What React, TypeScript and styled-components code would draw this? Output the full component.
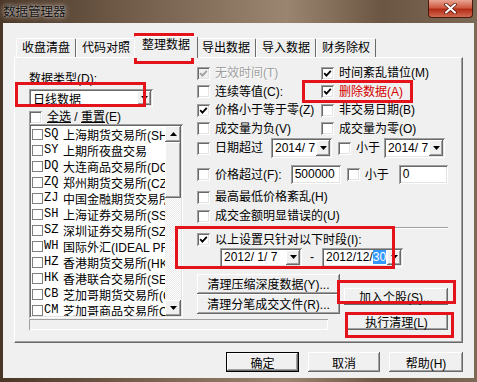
import React from 'react'
import styled, { createGlobalStyle, css } from 'styled-components'

const GlobalStyle = createGlobalStyle`
  html, body { margin: 0; padding: 0; }
  body {
    font-family: "Liberation Sans", "Noto Sans CJK SC", sans-serif;
    font-size: 12px;
    color: #000;
  }
  * { box-sizing: border-box; }
`

const raised = css`
  background: #f0f0f0;
  box-shadow: inset -1px -1px #696969, inset 1px 1px #fff, inset -2px -2px #a0a0a0, inset 2px 2px #f0f0f0;
`

const sunken = css`
  background: #fff;
  box-shadow: inset 1px 1px #a0a0a0, inset -1px -1px #fff, inset 2px 2px #696969, inset -2px -2px #e3e3e3;
`

const Window = styled.div`
  position: relative;
  width: 477px;
  height: 382px;
  display: flex;
  flex-direction: column;
  overflow: hidden;
  background: linear-gradient(90deg, #4a3626 0%, #6e5a47 25%, #9a8670 60%, #6a5642 80%, #7d6a56 100%);
`

const TitleBar = styled.div`
  height: 23px;
  display: flex;
  align-items: flex-start;
  padding-left: 3px;
`

const TitleText = styled.div`
  font-family: "Noto Sans CJK SC", sans-serif;
  font-size: 12.5px;
  line-height: 22px;
  color: #111;
  text-shadow: 0 0 6px rgba(255, 255, 255, 0.8), 0 0 2px rgba(255, 255, 255, 0.6);
`

const CloseButton = styled.div`
  margin-left: auto;
  margin-right: 4px;
  width: 45px;
  height: 18px;
  border: 1px solid #4a1a10;
  border-top: none;
  border-radius: 0 0 4px 4px;
  background: linear-gradient(#e9a594, #cf5a43 45%, #b12c16 55%, #d46a52);
  display: flex;
  align-items: center;
  justify-content: center;
`

const Client = styled.div`
  flex: 1;
  margin: 0 3px 4px;
  background: #f0f0f0;
  padding: 13px 11px 6px;
  display: flex;
  flex-direction: column;
`

const TabStrip = styled.div`
  height: 21px;
  display: flex;
  align-items: flex-end;
  padding-left: 2px;
  position: relative;
  z-index: 1;
`

const Tab = styled.div<{ $active?: boolean }>`
  height: 19px;
  padding: 0 5px;
  line-height: 18px;
  border-top: 1px solid #fff;
  border-left: 1px solid #fff;
  border-right: 1px solid #696969;
  border-radius: 2px 2px 0 0;
  white-space: nowrap;
  ${p => p.$active && css`
    height: 22px;
    margin: 0 -2px -1px;
    padding: 0 7px;
    line-height: 17px;
    background: #f0f0f0;
    position: relative;
  `}
`

const Panel = styled.div`
  height: 286px;
  border: 1px solid;
  border-color: #fff #696969 #696969 #fff;
  box-shadow: inset -1px -1px #a0a0a0;
  display: flex;
  flex-direction: column;
  padding: 6px 0 0 14px;
`

const TopRow = styled.div`
  display: flex;
  gap: 14px;
`

const LeftCol = styled.div`
  width: 154px;
  margin-top: 8px;
  display: flex;
  flex-direction: column;
`

const FieldLabel = styled.div`
  height: 14px;
  line-height: 14px;
  margin-bottom: 3px;
`

const Combo = styled.div<{ $w: number; $h?: number }>`
  ${sunken};
  width: ${p => p.$w}px;
  height: ${p => p.$h ?? 20}px;
  display: flex;
  padding: 2px;
  flex: none;
`

const ComboValue = styled.div`
  flex: 1;
  padding-left: 2px;
  display: flex;
  align-items: center;
  white-space: nowrap;
  overflow: hidden;
`

const DropBtn = styled.div<{ $w?: number }>`
  ${raised};
  width: ${p => p.$w ?? 14}px;
  display: flex;
  align-items: center;
  justify-content: center;
  flex: none;
`

const Selected = styled.span`
  background: #3399ff;
  color: #fff;
`

const SelectAllRow = styled.div`
  height: 17px;
  padding-top: 3px;
  display: flex;
  align-items: center;
`

const U = styled.span`
  text-decoration: underline;
`

const ListBox = styled.div`
  ${sunken};
  width: 154px;
  height: 194px;
  padding: 2px;
  display: flex;
`

const ListItems = styled.div`
  flex: 1;
  overflow: hidden;
  display: flex;
  flex-direction: column;
`

const ListRow = styled.div`
  height: 16px;
  flex: none;
  display: flex;
  align-items: center;
  padding-left: 1px;
  white-space: nowrap;
`

const SmallBox = styled.span`
  width: 11px;
  height: 11px;
  flex: none;
  border: 1px solid #7f7f7f;
  background: #fff;
  margin-right: 1px;
`

const Code = styled.span`
  width: 19px;
  flex: none;
  font-family: "Liberation Mono", monospace;
`

const ScrollBar = styled.div`
  width: 16px;
  display: flex;
  flex-direction: column;
`

const ScrollBtn = styled.div`
  ${raised};
  height: 16px;
  display: flex;
  align-items: center;
  justify-content: center;
`

const Thumb = styled.div`
  ${raised};
  height: 56px;
`

const Track = styled.div`
  flex: 1;
  background: repeating-conic-gradient(#fff 0 25%, #e9e9e9 0 50%) 0 0 / 2px 2px;
`

const RightCol = styled.div`
  width: 251px;
  display: flex;
  flex-direction: column;
`

const OptGrid = styled.div`
  display: grid;
  grid-template-columns: 124px 1fr;
  grid-auto-rows: 18.5px;
  align-items: center;
`

const CheckWrap = styled.label<{ $disabled?: boolean; $red?: boolean }>`
  display: flex;
  align-items: center;
  gap: 5px;
  white-space: nowrap;
  line-height: 16px;
  flex: none;
  color: ${p => (p.$disabled ? '#a0a0a0' : p.$red ? '#d40000' : '#000')};
  text-shadow: ${p => (p.$disabled ? '1px 1px #fff' : 'none')};
`

const Box = styled.span<{ $disabled?: boolean }>`
  width: 13px;
  height: 13px;
  flex: none;
  background: ${p => (p.$disabled ? '#f0f0f0' : '#fff')};
  box-shadow: inset 1px 1px #a0a0a0, inset -1px -1px #fff, inset 2px 2px #696969, inset -2px -2px #e3e3e3;
  display: flex;
  align-items: center;
  justify-content: center;
`

const Line = styled.div<{ $mt?: number; $h: number; $pl?: number }>`
  display: flex;
  align-items: center;
  height: ${p => p.$h}px;
  margin-top: ${p => p.$mt ?? 0}px;
  padding-left: ${p => p.$pl ?? 0}px;
`

const Gap = styled.div<{ $w: number }>`
  width: ${p => p.$w}px;
  flex: none;
  text-align: center;
`

const TextBox = styled.div<{ $w: number }>`
  ${sunken};
  width: ${p => p.$w}px;
  height: 19px;
  line-height: 19px;
  padding-left: 4px;
  flex: none;
`

const Separator = styled.div`
  height: 2px;
  margin: 2px 0 0 -10px;
  width: 261px;
  border-top: 1px solid #a0a0a0;
  border-bottom: 1px solid #fff;
`

const ButtonArea = styled.div`
  display: flex;
  margin-top: 7px;
  align-items: flex-start;
`

const ButtonStack = styled.div`
  display: flex;
  flex-direction: column;
`

const Btn = styled.div<{ $w: number; $h: number; $default?: boolean; $mt?: number; $ml?: number }>`
  ${raised};
  width: ${p => p.$w}px;
  height: ${p => p.$h}px;
  margin-top: ${p => p.$mt ?? 0}px;
  margin-left: ${p => p.$ml ?? 0}px;
  display: flex;
  align-items: center;
  justify-content: center;
  white-space: nowrap;
  flex: none;
  ${p => p.$default && css`
    border: 1px solid #000;
  `}
`

const BottomRow = styled.div`
  display: flex;
  align-items: flex-start;
  margin-top: 1px;
`

const StatusBar = styled.div`
  width: 299px;
  height: 11px;
  box-shadow: inset 1px 1px #a0a0a0, inset -1px -1px #fff;
`

const DialogButtons = styled.div`
  display: flex;
  justify-content: flex-end;
  margin-top: 9px;
  gap: 9px;
`

const Mark = styled.div<{ $x: number; $y: number; $w: number; $h: number }>`
  position: absolute;
  left: ${p => p.$x}px;
  top: ${p => p.$y}px;
  width: ${p => p.$w}px;
  height: ${p => p.$h}px;
  border: 3px solid #e3121b;
  pointer-events: none;
`

const Arrow: React.FC<{ up?: boolean }> = ({ up }) => (
  <svg width="7" height="4" viewBox="0 0 7 4">
    <polygon points={up ? '3.5,0 7,4 0,4' : '0,0 7,0 3.5,4'} fill="#000" />
  </svg>
)

const CheckMark: React.FC<{ color?: string }> = ({ color = '#000' }) => (
  <svg width="9" height="9" viewBox="0 0 9 9">
    <path d="M1.2 4.2 L3.4 6.6 L7.8 1.8" fill="none" stroke={color} strokeWidth="1.8" />
  </svg>
)

const Check: React.FC<{ checked?: boolean; disabled?: boolean; red?: boolean; children?: React.ReactNode }> = ({
  checked,
  disabled,
  red,
  children,
}) => (
  <CheckWrap $disabled={disabled} $red={red}>
    <Box $disabled={disabled}>{checked && <CheckMark color={disabled ? '#a0a0a0' : '#000'} />}</Box>
    {children && <span>{children}</span>}
  </CheckWrap>
)

const DropCombo: React.FC<{ w: number; h?: number; bw?: number; children: React.ReactNode }> = ({ w, h, bw, children }) => (
  <Combo $w={w} $h={h}>
    <ComboValue>{children}</ComboValue>
    <DropBtn $w={bw}>
      <Arrow />
    </DropBtn>
  </Combo>
)

const exchanges: [string, string][] = [
  ['SQ', '上海期货交易所(SHFE)'],
  ['SY', '上期所夜盘交易'],
  ['DQ', '大连商品交易所(DCE)'],
  ['ZQ', '郑州期货交易所(CZCE)'],
  ['ZJ', '中国金融期货交易所(CFFEX)'],
  ['SH', '上海证券交易所(SSE)'],
  ['SZ', '深圳证券交易所(SZSE)'],
  ['WH', '国际外汇(IDEAL PRO)'],
  ['HZ', '香港期货交易所(HKFE)'],
  ['HK', '香港联合交易所(SEHK)'],
  ['CB', '芝加哥期货交易所(CBOT)'],
  ['CM', '芝加哥商品交易所CME'],
]

const tabs = ['收盘清盘', '代码对照', '整理数据', '导出数据', '导入数据', '财务除权']

export default function App() {
  return (
    <>
      <GlobalStyle />
      <Window>
        <TitleBar>
          <TitleText>数据管理器</TitleText>
          <CloseButton>
            <svg width="13" height="11" viewBox="0 0 13 11">
              <path d="M2 1.5 L11 9.5 M11 1.5 L2 9.5" stroke="#5a1a0e" strokeWidth="3.6" strokeLinecap="round" />
              <path d="M2 1.5 L11 9.5 M11 1.5 L2 9.5" stroke="#fff" strokeWidth="2" strokeLinecap="round" />
            </svg>
          </CloseButton>
        </TitleBar>
        <Client>
          <TabStrip>
            {tabs.map(t => (
              <Tab key={t} $active={t === '整理数据'}>
                {t}
              </Tab>
            ))}
          </TabStrip>
          <Panel>
            <TopRow>
              <LeftCol>
                <FieldLabel>数据类型(D):</FieldLabel>
                <DropCombo w={124} h={18}>日线数据</DropCombo>
                <SelectAllRow>
                  <Check>
                    <U>全选</U> / <U>重置</U>(E)
                  </Check>
                </SelectAllRow>
                <ListBox>
                  <ListItems>
                    {exchanges.map(([code, name]) => (
                      <ListRow key={code}>
                        <SmallBox />
                        <Code>{code}</Code>
                        <span>{name}</span>
                      </ListRow>
                    ))}
                  </ListItems>
                  <ScrollBar>
                    <ScrollBtn>
                      <Arrow up />
                    </ScrollBtn>
                    <Thumb />
                    <Track />
                    <ScrollBtn>
                      <Arrow />
                    </ScrollBtn>
                  </ScrollBar>
                </ListBox>
              </LeftCol>
              <RightCol>
                <OptGrid>
                  <Check checked disabled>无效时间(T)</Check>
                  <Check checked>时间紊乱错位(M)</Check>
                  <Check>连续等值(C):</Check>
                  <Check checked red>删除数据(A)</Check>
                  <Check checked>价格小于等于零(Z)</Check>
                  <Check>非交易日期(B)</Check>
                  <Check>成交量为负(V)</Check>
                  <Check>成交量为零(O)</Check>
                </OptGrid>
                <Line $h={20}>
                  <Check>日期超过</Check>
                  <Gap $w={8} />
                  <DropCombo w={61}>2014/ 7</DropCombo>
                  <Gap $w={6} />
                  <Check>小于</Check>
                  <Gap $w={4} />
                  <DropCombo w={61}>2014/ 7</DropCombo>
                </Line>
                <Line $h={19} $mt={7}>
                  <Check>价格超过(F):</Check>
                  <Gap $w={9} />
                  <TextBox $w={50}>500000</TextBox>
                  <Gap $w={6} />
                  <Check>小于</Check>
                  <Gap $w={10} />
                  <TextBox $w={49}>0</TextBox>
                </Line>
                <Line $h={17} $mt={4.5}>
                  <Check>最高最低价格紊乱(H)</Check>
                </Line>
                <Line $h={17} $mt={2}>
                  <Check>成交金额明显错误的(U)</Check>
                </Line>
                <Separator />
                <Line $h={16} $mt={3}>
                  <Check checked>以上设置只针对以下时段(I):</Check>
                </Line>
                <Line $h={19} $pl={23}>
                  <DropCombo w={82} h={19}>2012/ 1/ 7</DropCombo>
                  <Gap $w={20}>-</Gap>
                  <DropCombo w={81} h={19}>
                    <span>2012/12/</span>
                    <Selected>30</Selected>
                  </DropCombo>
                </Line>
                <ButtonArea>
                  <ButtonStack>
                    <Btn $w={143} $h={20}>清理压缩深度数据(Y)...</Btn>
                    <Btn $w={143} $h={20}>清理分笔成交文件(R)...</Btn>
                  </ButtonStack>
                  <Btn $w={104} $h={17} $mt={14} $ml={4}>加入个股(S)...</Btn>
                </ButtonArea>
              </RightCol>
            </TopRow>
            <BottomRow>
              <StatusBar />
              <Btn $w={103} $h={18} $mt={-7} $ml={17}>执行清理(L)</Btn>
            </BottomRow>
          </Panel>
          <DialogButtons>
            <Btn $w={73} $h={20} $default>确定</Btn>
            <Btn $w={72} $h={20}>取消</Btn>
            <Btn $w={74} $h={20}>帮助(H)</Btn>
          </DialogButtons>
        </Client>
        <Mark $x={134} $y={33} $w={60} $h={31} />
        <Mark $x={15} $y={82} $w={131} $h={25} />
        <Mark $x={302} $y={80} $w={111} $h={23} />
        <Mark $x={175} $y={226} $w={220} $h={43} />
        <Mark $x={337} $y={280} $w={119} $h={24} />
        <Mark $x={345} $y={312} $w={109} $h={26} />
      </Window>
    </>
  )
}
